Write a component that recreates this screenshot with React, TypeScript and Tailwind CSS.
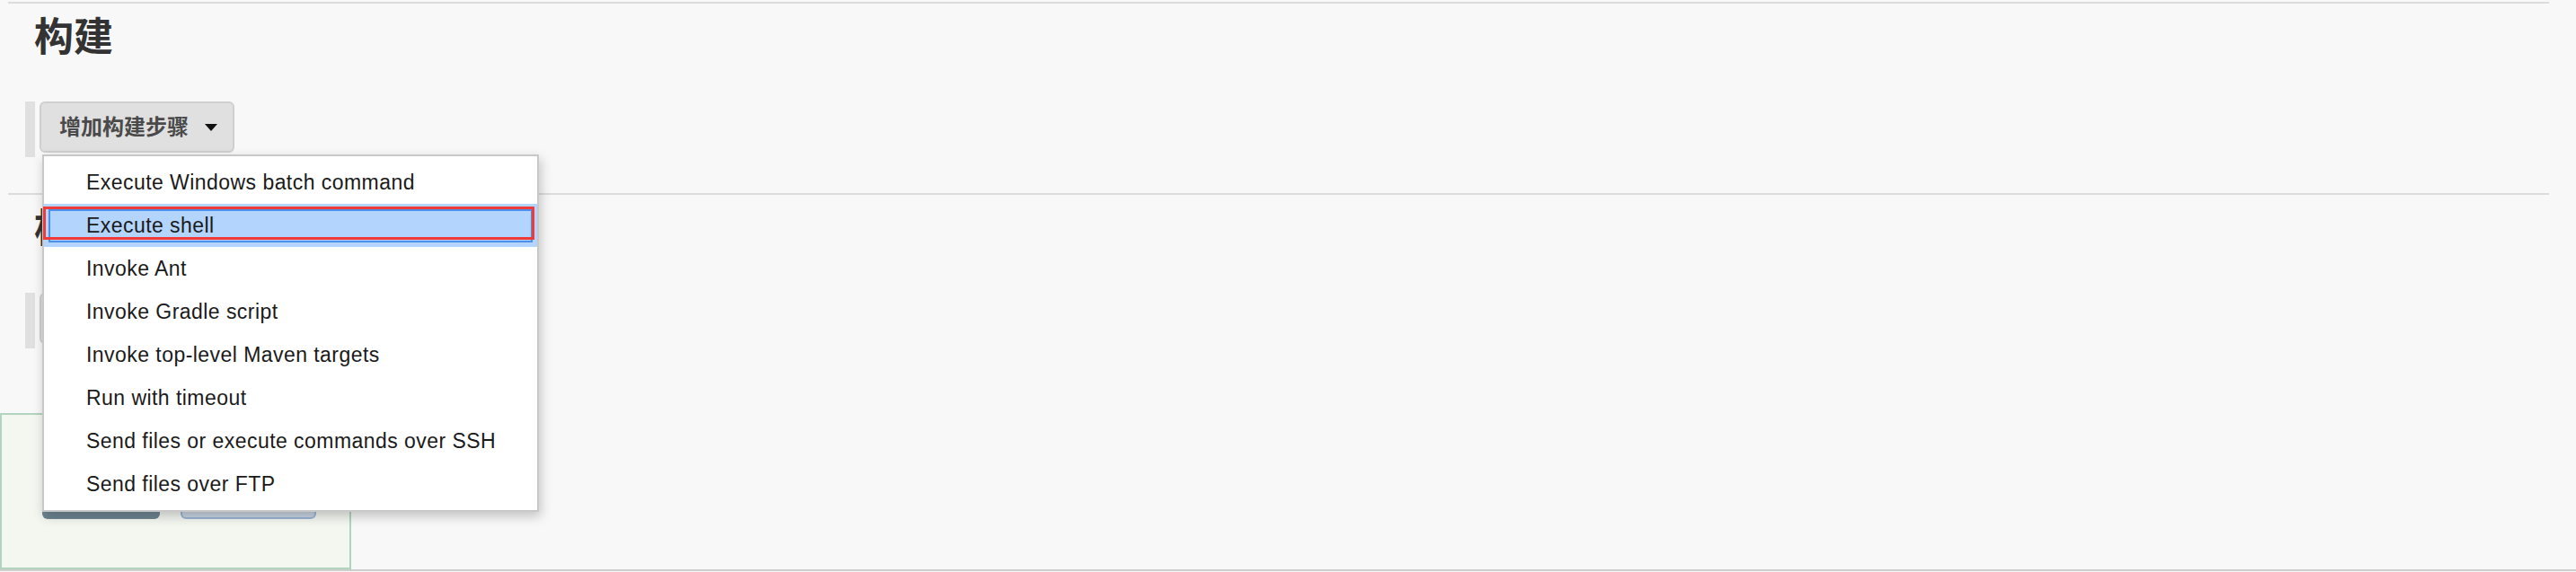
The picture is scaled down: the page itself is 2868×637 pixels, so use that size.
import React from "react";

const steps = [
  "Execute Windows batch command",
  "Execute shell",
  "Invoke Ant",
  "Invoke Gradle script",
  "Invoke top-level Maven targets",
  "Run with timeout",
  "Send files or execute commands over SSH",
  "Send files over FTP",
];

function Caret() {
  return (
    <svg width="14" height="8" viewBox="0 0 14 8" className="ml-[18px] shrink-0">
      <path d="M0 0 L14 0 L7 8 Z" fill="#111" />
    </svg>
  );
}

function StepButton({ label }: { label: string }) {
  return (
    <div className="flex items-start pl-[28px]">
      <div className="h-[62px] w-[11px] bg-[#e0e0e0]" />
      <button
        type="button"
        className="ml-[5px] flex h-[57px] items-center rounded-[6px] border-2 border-[#cfcfcf] bg-[#e0e0e0] pl-[20px] pr-[17px] text-[24px] font-bold leading-none text-[#4a4a4a]"
      >
        {label}
        <Caret />
      </button>
    </div>
  );
}

function Divider() {
  return <div className="ml-[9px] h-[2px] w-[2829px] bg-[#dcdcdc]" />;
}

export default function App() {
  return (
    <div className="relative h-[637px] w-[2868px] overflow-hidden bg-[#f8f8f8] font-['Liberation_Sans','Noto_Sans_CJK_SC',sans-serif]">
      <div className="pt-[2px]">
        <Divider />
      </div>
      <h2 className="mt-[16px] pl-[38px] text-[44px] font-bold leading-[44px] text-[#333]">
        构建
      </h2>
      <div className="mt-[49px]">
        <StepButton label="增加构建步骤" />
      </div>

      <div className="mt-[40px]">
        <Divider />
      </div>
      <h2 className="mt-[16px] pl-[38px] text-[44px] font-bold leading-[44px] text-[#333]">
        构建后操作
      </h2>
      <div className="mt-[49px]">
        <StepButton label="增加构建后操作步骤" />
      </div>

      {/* save / apply bar, its buttons sit under the open menu */}
      <div className="mt-[72px] flex h-[174px] w-[391px] items-start gap-[23px] border-2 border-[#b0d4be] bg-[#f4f7f0] pl-[45px] pt-[41px]">
        <button
          type="button"
          aria-label="保存"
          className="h-[75px] w-[131px] rounded-[6px] bg-gradient-to-b from-[#a3b6c0] to-[#6b8390]"
        />
        <button
          type="button"
          aria-label="应用"
          className="h-[75px] w-[151px] rounded-[6px] border-2 border-[#9bb5d6] bg-[#c9d5e3]"
        />
      </div>
      <div className="h-[2px] w-full bg-[#cdcdcd]" />

      {/* open dropdown menu */}
      <div className="absolute left-[47px] top-[172px] w-[553px] border-2 border-[#c8c8c8] bg-white py-[5px] shadow-[2px_5px_12px_rgba(0,0,0,0.22)]">
        {steps.map((s, i) => (
          <div
            key={s}
            className={
              i === 1
                ? "relative flex h-[48px] items-center bg-[#b3d4fc] pl-[47px] text-[23px] tracking-[0.45px] text-[#1a1a1a]"
                : "flex h-[48px] items-center pl-[47px] text-[23px] tracking-[0.45px] text-[#1a1a1a]"
            }
          >
            {i === 1 && (
              <>
                <div className="absolute left-[5px] top-[6px] h-[37px] w-[539px] border-2 border-[#4d8fe6]" />
                <div className="absolute left-[-1px] top-[3px] h-[37px] w-[547px] border-[3px] border-[#f03a3a]" />
              </>
            )}
            <span className="relative">{s}</span>
          </div>
        ))}
      </div>
    </div>
  );
}
